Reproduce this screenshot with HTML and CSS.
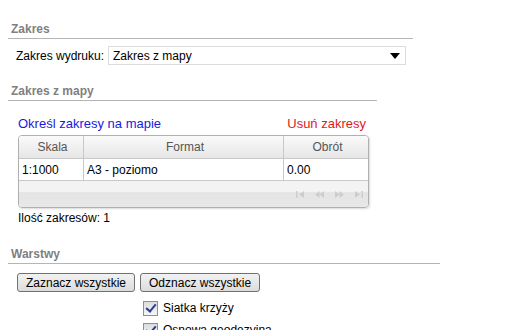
FILE: index.html
```html
<!DOCTYPE html>
<html lang="pl">
<head>
    <meta charset="UTF-8">
    <title>Wydruk</title>
    <link rel="stylesheet" href="styles.css">
</head>
<body>
    <div class="panel">
        <fieldset class="section section-wide">
            <div class="section-title">Zakres</div>
            <div class="field-row">
                <label class="field-label">Zakres wydruku:</label>
                <div class="select">
                    <span>Zakres z mapy</span>
                    <span class="select-arrow"></span>
                </div>
            </div>
        </fieldset>

        <fieldset class="section section-narrow">
            <div class="section-title">Zakres z mapy</div>
            <div class="map-body">
                <div class="links">
                    <a class="link-blue" href="#">Określ zakresy na mapie</a>
                    <a class="link-red" href="#">Usuń zakresy</a>
                </div>
                <div class="grid">
                    <div class="grid-row grid-head">
                        <div class="cell col-scale">Skala</div>
                        <div class="cell col-format">Format</div>
                        <div class="cell col-rot">Obrót</div>
                    </div>
                    <div class="grid-row grid-data">
                        <div class="cell col-scale">1:1000</div>
                        <div class="cell col-format">A3 - poziomo</div>
                        <div class="cell col-rot">0.00</div>
                    </div>
                    <div class="grid-foot">
                        <svg class="pager" width="8" height="7" viewBox="0 0 8 7"><rect x="0" y="0" width="1.5" height="7"/><path d="M8 0 L8 7 L3 3.5 Z"/></svg>
                        <svg class="pager" width="9" height="7" viewBox="0 0 9 7"><path d="M4.5 0 L4.5 7 L0 3.5 Z M9 0 L9 7 L4.5 3.5 Z"/></svg>
                        <svg class="pager" width="9" height="7" viewBox="0 0 9 7"><path d="M0 0 L0 7 L4.5 3.5 Z M4.5 0 L4.5 7 L9 3.5 Z"/></svg>
                        <svg class="pager" width="8" height="7" viewBox="0 0 8 7"><path d="M0 0 L0 7 L5 3.5 Z"/><rect x="6.5" y="0" width="1.5" height="7"/></svg>
                    </div>
                </div>
                <div class="count">Ilość zakresów: 1</div>
            </div>
        </fieldset>

        <fieldset class="section section-layers">
            <div class="section-title">Warstwy</div>
            <div class="buttons">
                <button class="btn">Zaznacz wszystkie</button>
                <button class="btn">Odznacz wszystkie</button>
            </div>
            <ul class="layer-list">
                <li><span class="check"></span>Siatka krzyży</li>
                <li><span class="check"></span>Osnowa geodezyjna</li>
            </ul>
        </fieldset>
    </div>
</body>
</html>
```

FILE: styles.css
```css
body {
    margin: 0;
    font-family: 'Liberation Sans', Arial, sans-serif;
    font-size: 12px;
    color: #000;
    background: #fff;
}

.panel {
    padding: 21px 0 0 8px;
}

.section {
    border: none;
    margin: 0;
    padding: 0;
}

.section-title {
    font-weight: bold;
    color: #7f7f7f;
    padding: 1px 0 1px 3px;
    border-bottom: 1px solid #b5b5b5;
    line-height: 15px;
}

.section-wide { width: 405px; }
.section-narrow { width: 369px; margin-top: 18px; }
.section-layers { width: 432px; margin-top: 20px; }

.field-row {
    display: flex;
    align-items: center;
    padding: 7px 7px 0 8px;
}

.field-label {
    margin-right: 4px;
}

.select {
    flex: 1;
    display: flex;
    align-items: center;
    justify-content: space-between;
    height: 17px;
    border: 1px solid #dcdcdc;
    padding: 0 5px 0 4px;
}

.select-arrow {
    width: 0;
    height: 0;
    border-left: 5px solid transparent;
    border-right: 5px solid transparent;
    border-top: 6px solid #000;
}

.map-body {
    padding: 0 0 0 10px;
    width: 351px;
}

.links {
    display: flex;
    justify-content: space-between;
    padding: 15px 3px 0 0;
    font-size: 13px;
    line-height: 15px;
}

.links a {
    text-decoration: none;
}

.link-blue { color: #1a1adb; }
.link-red { color: #e01a1a; }

.grid {
    margin-top: 4px;
    border: 1px solid #b0b0b0;
    border-radius: 4px;
    overflow: hidden;
    box-shadow: 1px 1px 2px rgba(0, 0, 0, 0.15);
}

.grid-row {
    display: flex;
}

.grid-head {
    height: 22px;
    background: linear-gradient(#fafafa, #e6e6e6);
    color: #555;
    border-bottom: 1px solid #c8c8c8;
}

.grid-head .cell {
    justify-content: center;
}

.grid-data {
    height: 21px;
    background: #fff;
}

.cell {
    display: flex;
    align-items: center;
    padding-left: 3px;
    border-right: 1px solid #c8c8c8;
}

.cell:last-child { border-right: none; }

.col-scale { width: 61px; }
.col-format { width: 196px; }
.col-rot { flex: 1; }

.grid-foot {
    height: 26px;
    display: flex;
    justify-content: flex-end;
    align-items: center;
    gap: 11px;
    padding-right: 5px;
    background: linear-gradient(#f3f3f3, #f3f3f3 40%, #e4e4e4 45%, #e8e8e8);
    border-top: 1px solid #c8c8c8;
}

.pager {
    fill: #cdcdcd;
}

.count {
    padding-top: 3px;
    line-height: 15px;
}

.buttons {
    display: flex;
    gap: 5px;
    padding: 9px 0 0 9px;
}

.btn {
    font-family: inherit;
    font-size: 12px;
    height: 19px;
    padding: 0 8px;
    border: 1px solid #707070;
    border-radius: 3px;
    background: linear-gradient(#f2f2f2, #dcdcdc);
    color: #000;
}

.layer-list {
    list-style: none;
    margin: 0;
    padding: 5px 0 0 135px;
}

.layer-list li {
    display: flex;
    align-items: center;
    height: 22px;
}

.check {
    position: relative;
    width: 13px;
    height: 13px;
    margin-right: 5px;
    border: 1px solid #8e8f8f;
    background: linear-gradient(#dcdcdc, #f6f6f6);
}

.check::after {
    content: "";
    position: absolute;
    left: 4px;
    top: 0;
    width: 4px;
    height: 8px;
    border: solid #2a3f8f;
    border-width: 0 2px 2px 0;
    transform: rotate(40deg);
}
```
